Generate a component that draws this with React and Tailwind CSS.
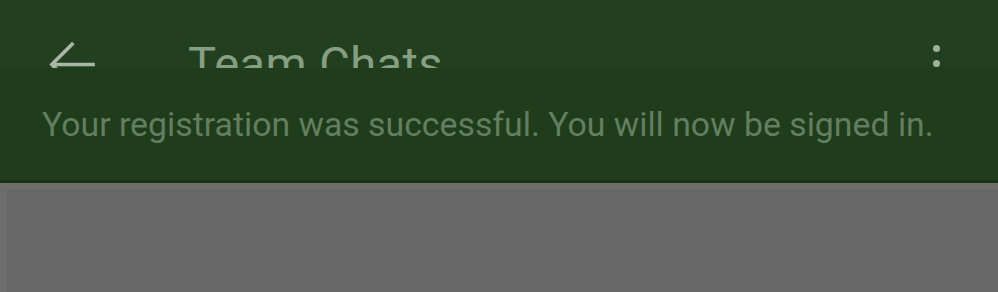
export default function App() {
  return (
    <div className="w-[998px] h-[292px] overflow-hidden bg-[#676767] flex flex-col" style={{ fontFamily: 'Roboto, "Noto Sans", sans-serif' }}>
      {/* toolbar, mostly hidden under the snackbar */}
      <div className="h-[68px] shrink-0 overflow-hidden bg-[#22401f]">
        <div className="flex items-start pt-[31px] pl-[39px] pr-[40px]">
          <svg width="67" height="67" viewBox="0 0 24 24" className="shrink-0">
            <path d="M12.3 4.3 4.6 12 12.3 19.7 M4.6 12H20" fill="none" stroke="#a9b8a6" strokeWidth="1.3" strokeLinejoin="miter" />
          </svg>
          <div className="ml-[82px] pt-[5px] text-[47px] leading-[56px] text-[#869f83] tracking-[0.4px] whitespace-nowrap">Team Chats</div>
          <div className="ml-auto pt-[14px] flex flex-col items-center gap-[8px] pr-[18px]">
            <span className="w-[7px] h-[7px] rounded-full bg-[#9fb09c]" />
            <span className="w-[7px] h-[7px] rounded-full bg-[#9fb09c]" />
            <span className="w-[7px] h-[7px] rounded-full bg-[#9fb09c]" />
          </div>
        </div>
      </div>
      {/* snackbar */}
      <div className="h-[112px] shrink-0 bg-[#1f3c1b] pl-[42px] pt-[37px]">
        <p className="text-[33.8px] leading-[40px] text-[#637e60] whitespace-nowrap">
          Your registration was successful. You will now be signed in.
        </p>
      </div>
      <div className="h-[3px] shrink-0 bg-[#18301a]" />
      <div className="h-[6px] shrink-0 bg-[#6d6f69]" />
      <div className="flex-1 flex">
        <div className="w-[7px] bg-[#6d6d6d]" />
        <div className="flex-1 bg-[#676767]" />
      </div>
    </div>
  );
}
